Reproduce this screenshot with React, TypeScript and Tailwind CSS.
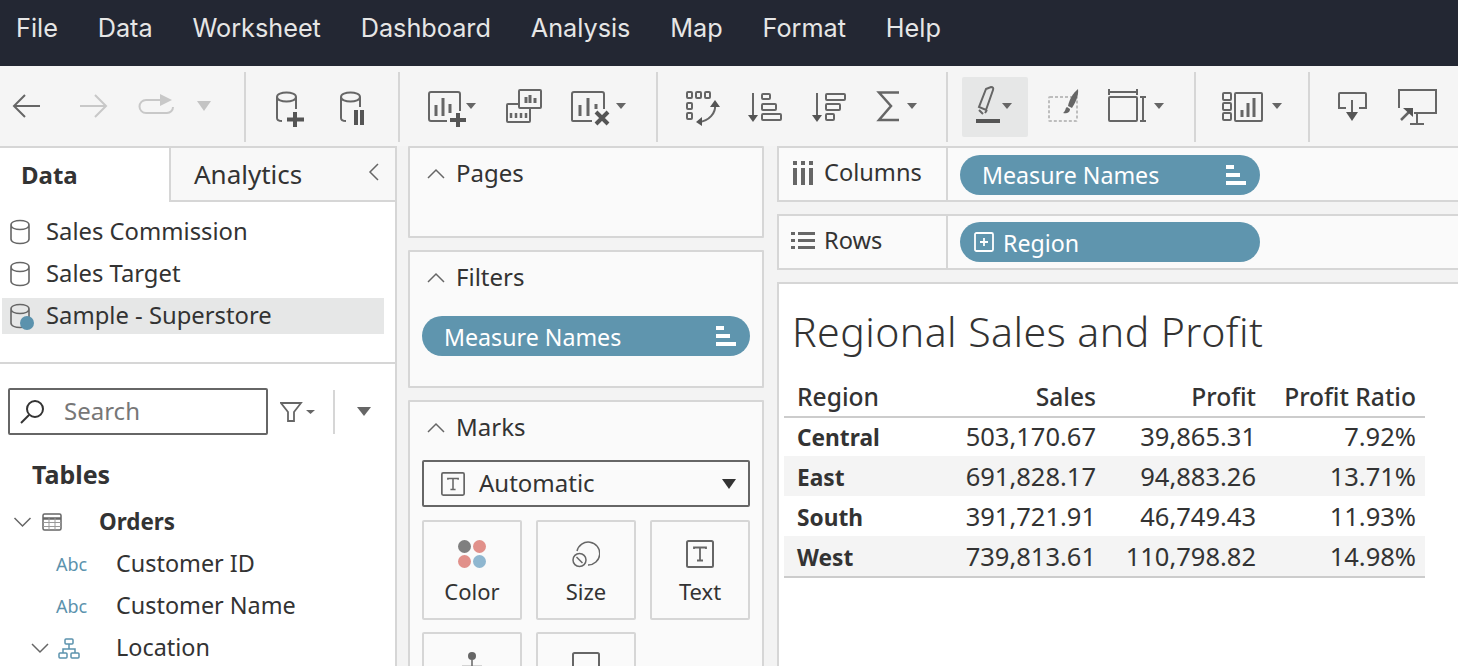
import type { ReactNode } from "react";

const sans = "font-['Noto_Sans',sans-serif]";

// toolbar cell: the svg uses page coordinates so strokes can be read straight off the reference
function Cell({ x, to, y = 72, h = 70, children }: { x: number; to: number; y?: number; h?: number; children: ReactNode }) {
  const w = to - x;
  return (
    <svg width={w} height={h} viewBox={`${x} ${y} ${w} ${h}`} fill="none" stroke="#666" strokeWidth="2" className="shrink-0">
      {children}
    </svg>
  );
}

const Sep = () => <div className="w-[2px] h-[70px] bg-[#d6d6d6] shrink-0" />;

function Caret({ x, y = 103, w = 10, h = 6, color = "#666" }: { x: number; y?: number; w?: number; h?: number; color?: string }) {
  return <path d={`M${x} ${y}h${w}l-${w / 2} ${h}z`} fill={color} stroke="none" />;
}

function Toolbar() {
  return (
    <div className="h-[80px] bg-[#f5f5f5] flex items-start pt-[6px] shrink-0">
      <Cell x={0} to={60}>
        <path d="M40 106H15M25 95 14 106 25 117" />
      </Cell>
      <Cell x={60} to={125}>
        <path d="M80 106h25M95 95l11 11-11 11" stroke="#c8c8c8" />
      </Cell>
      <Cell x={125} to={185}>
        <path d="M160 100h-14a6.500 6.500 0 0 0 0 13h21a6 6 0 0 0 6-6" stroke="#c8c8c8" />
        <path d="M160 94l12 6-12 6z" fill="#c8c8c8" stroke="none" />
      </Cell>
      <Cell x={185} to={244}>
        <Caret x={197} y={101} w={14} h={10} color="#c4c4c4" />
      </Cell>
      <Sep />
      <Cell x={246} to={322}>
        <path d="M277 97c0-6 19-6 19 0s-19 6-19 0v21c0 2 2 3 5 3M296 97v12" />
        <path d="M295 112v15M287 119.500h17" strokeWidth="4" stroke="#555" />
      </Cell>
      <Cell x={322} to={398}>
        <path d="M341 97c0-6 19-6 19 0s-19 6-19 0v21c0 2 2 3 5 3M360 97v10" />
        <path d="M356 110v15M362 110v15" strokeWidth="4" stroke="#555" />
      </Cell>
      <Sep />
      <Cell x={400} to={490}>
        <path d="M447 121h-16a2 2 0 0 1-2-2V94a2 2 0 0 1 2-2h27a2 2 0 0 1 2 2v17" />
        <path d="M436 105v11M443 98v18M450 104v9" strokeWidth="3" />
        <path d="M458 113v14M450 120h16" strokeWidth="4" stroke="#555" />
        <Caret x={466} />
      </Cell>
      <Cell x={490} to={557}>
        <rect x="519" y="90" width="22" height="18" rx="1" />
        <path d="M518 104h-10a1 1 0 0 0-1 1v16a1 1 0 0 0 1 1h21a1 1 0 0 0 1-1v-13" />
        <path d="M526 103v-6M530 103V95M535 103v-5" strokeWidth="3" />
        <path d="M511 118v-5M516 118v-5M521 118v-5M526 118v-5" strokeWidth="2.500" />
      </Cell>
      <Cell x={557} to={656}>
        <path d="M592 121h-19a1 1 0 0 1-1-1V94a2 2 0 0 1 2-2h28a2 2 0 0 1 2 2v15" />
        <path d="M580 105v11M588 98v18M596 104v5" strokeWidth="3" />
        <path d="M596 112l12 12M608 112l-12 12" strokeWidth="4" stroke="#555" />
        <Caret x={616} />
      </Cell>
      <Sep />
      <Cell x={658} to={733}>
        <rect x="687" y="92" width="5" height="6" rx="1" />
        <rect x="696" y="92" width="5" height="6" rx="1" />
        <rect x="705" y="92" width="5" height="6" rx="1" />
        <rect x="687" y="103" width="5" height="6" rx="1" />
        <rect x="687" y="113" width="5" height="6" rx="1" />
        <path d="M715 105c1 8-6 16-16 17" />
        <path d="M710 107h10l-5-7zM702 117v9l-6-4z" fill="#555" stroke="none" />
      </Cell>
      <Cell x={733} to={798}>
        <path d="M753 93v24" />
        <path d="M748 115h10l-5 7z" fill="#555" stroke="none" />
        <rect x="762" y="94" width="8" height="5" rx="1" />
        <rect x="762" y="104" width="14" height="6" rx="1" />
        <rect x="762" y="114" width="19" height="6" rx="1" />
      </Cell>
      <Cell x={798} to={862}>
        <path d="M817 93v24" />
        <path d="M812 115h10l-5 7z" fill="#555" stroke="none" />
        <rect x="826" y="94" width="19" height="6" rx="1" />
        <rect x="826" y="104" width="14" height="6" rx="1" />
        <rect x="826" y="114" width="8" height="6" rx="1" />
      </Cell>
      <Cell x={862} to={946}>
        <path d="M899 92.500h-20l12 13.500-12 14h20" strokeWidth="2.500" />
        <Caret x={907} />
      </Cell>
      <Sep />
      <div className="ml-[14px] mt-[5px] h-[60px] w-[66px] rounded-[2px] bg-[#e6e7e7] shrink-0">
        <Cell x={962} to={1028} y={77} h={60}>
          <path d="M986 89l5-2q3 0 2 3l-7 20-7-3z" />
          <path d="M979 110l4 4M985 113l2-3" />
          <path d="M976 121h24" strokeWidth="4" stroke="#555" />
          <Caret x={1002} />
        </Cell>
      </div>
      <Cell x={1028} to={1090}>
        <rect x="1049" y="97" width="28" height="24" rx="1" stroke="#bdbdbd" strokeDasharray="3 2" />
        <path d="M1078 89c1 7-3 14-6 19l-4-2c1-6 5-13 10-17z" fill="#666" stroke="none" />
        <path d="M1067 107c-2 1-1 4-4 6 3 1 7 0 7-4z" fill="#666" stroke="none" />
      </Cell>
      <Cell x={1090} to={1194}>
        <path d="M1109 89v6M1137 89v6M1109 92h28" />
        <rect x="1109" y="97" width="28" height="24" rx="1" />
        <path d="M1140 97h6M1143 97v24M1140 121h6" />
        <Caret x={1154} />
      </Cell>
      <Sep />
      <Cell x={1196} to={1308}>
        <rect x="1223" y="93" width="8" height="7" rx="1" />
        <rect x="1223" y="103" width="8" height="7" rx="1" />
        <rect x="1223" y="113" width="8" height="7" rx="1" />
        <rect x="1235" y="93" width="27" height="28" rx="1" />
        <path d="M1242 117v-7M1248 117v-14M1254 117V98" strokeWidth="3" />
        <Caret x={1272} />
      </Cell>
      <Sep />
      <Cell x={1310} to={1380}>
        <path d="M1346 108h-7V94a1 1 0 0 1 1-1h25a1 1 0 0 1 1 1v14h-7" />
        <path d="M1352 100v14" />
        <path d="M1346 112h12l-6 9z" fill="#555" stroke="none" />
      </Cell>
      <Cell x={1380} to={1458}>
        <path d="M1399 108V90h37v23h-22M1417 113v10M1410 124h14" />
        <path d="M1401 120l9-9" strokeWidth="2.500" />
        <path d="M1403 108h10v9z" fill="#555" stroke="none" />
      </Cell>
    </div>
  );
}

const Cylinder = () => (
  <svg width="22" height="26" viewBox="0 0 22 26" fill="none" stroke="#666" strokeWidth="1.600" className="shrink-0">
    <path d="M2 6c0-6 18-6 18 0s-18 6-18 0v14c0 6 18 6 18 0V6" />
  </svg>
);

function Chevron({ up = false, w = 18 }: { up?: boolean; w?: number }) {
  return (
    <svg width={w} height="11" viewBox="0 0 18 11" fill="none" stroke="#666" strokeWidth="1.500" className="shrink-0">
      <path d={up ? "M1 10 9 2l8 8" : "M1 1l8 8 8-8"} />
    </svg>
  );
}

function Source({ label, active = false }: { label: string; active?: boolean }) {
  return (
    <div className={`relative h-[36px] ml-[2px] w-[382px] pl-[7px] flex items-center gap-[15px] text-[23.8px] text-[#333] ${active ? "bg-[#e6e7e7]" : ""}`}>
      <Cylinder />
      {active && <span className="absolute left-[18px] top-[18px] size-[14px] rounded-full bg-[#5b92ad]" />}
      <span>{label}</span>
    </div>
  );
}

function Field({ label }: { label: string }) {
  return (
    <div className="h-[42px] flex items-center pl-[56px]">
      <span className="w-[60px] text-[18px] text-[#5b92ad]">Abc</span>
      <span className="text-[23.4px] text-[#333]">{label}</span>
    </div>
  );
}

function DataPane() {
  return (
    <div className="w-[397px] h-full shrink-0 bg-white border-r-[2px] border-[#d6d6d6] flex flex-col overflow-hidden">
      <div className="h-[56px] flex shrink-0 border-t-[2px] border-[#d6d6d6]">
        <div className="w-[169px] pl-[21px] pt-[9px] text-[24px] font-bold text-[#333]">Data</div>
        <div className="flex-1 h-[54px] bg-[#f8f8f8] border-l-[2px] border-b-[2px] border-[#d6d6d6] flex items-start justify-between pl-[23px] pr-[16px] pt-[7px] text-[26px] text-[#333]">
          <span>Analytics</span>
          <svg width="11" height="18" viewBox="0 0 11 18" fill="none" stroke="#666" strokeWidth="1.500" className="mt-[8px]">
            <path d="M10 1 2 9l8 8" />
          </svg>
        </div>
      </div>
      <div className="pt-[12px] flex flex-col gap-[6px] h-[162px] shrink-0 border-b-[2px] border-[#d6d6d6]">
        <Source label="Sales Commission" />
        <Source label="Sales Target" />
        <Source label="Sample - Superstore" active />
      </div>
      <div className="flex items-center h-[47px] mt-[24px] ml-[8px] shrink-0">
        <div className="w-[260px] h-[47px] border-[2px] border-[#666] rounded-[2px] flex items-center pl-[10px] gap-[19px] text-[24px] text-[#777]">
          <svg width="25" height="24" viewBox="0 0 25 24" fill="none" stroke="#333" strokeWidth="2">
            <circle cx="15" cy="9" r="8" />
            <path d="M9 15 1 23" />
          </svg>
          <span className="pb-[2px]">Search</span>
        </div>
        <svg width="36" height="20" viewBox="0 0 36 20" fill="none" stroke="#666" strokeWidth="1.800" className="ml-[12px]">
          <path d="M1 1h20l-7 9v9h-6v-9z" />
          <path d="M26 8h9l-4.500 4z" fill="#666" stroke="none" />
        </svg>
        <div className="ml-[17px] w-[2px] h-[44px] bg-[#d6d6d6]" />
        <svg width="14" height="9" viewBox="0 0 14 9" className="ml-[22px]">
          <path d="M0 0h14L7 9z" fill="#666" />
        </svg>
      </div>
      <div className="pl-[32px] mt-[22px] text-[25px] font-bold text-[#333] shrink-0 leading-[34px]">Tables</div>
      <div className="mt-[10px] flex flex-col">
        <div className="h-[42px] flex items-center pl-[13px]">
          <Chevron w={19} />
          <svg width="20" height="18" viewBox="0 0 20 18" fill="none" stroke="#666" className="ml-[10px]">
            <rect x="1" y="1" width="18" height="16" rx="1.500" strokeWidth="1.500" />
            <path d="M1 5.500h18" strokeWidth="2.500" />
            <path d="M1 9.500h18M1 13.500h18M7 5v12M13 5v12" strokeWidth="1" stroke="#999" />
          </svg>
          <span className="ml-[37px] text-[22.4px] font-bold text-[#333]">Orders</span>
        </div>
        <Field label="Customer ID" />
        <Field label="Customer Name" />
        <div className="h-[42px] flex items-center pl-[31px]">
          <Chevron w={18} />
          <svg width="22" height="21" viewBox="0 0 22 21" fill="none" stroke="#5b92ad" strokeWidth="1.500" className="ml-[9px]">
            <rect x="7" y="1" width="8" height="5" rx="1" />
            <rect x="1" y="15" width="8" height="5" rx="1" />
            <rect x="13" y="15" width="8" height="5" rx="1" />
            <path d="M11 6v5M5 15v-4h12v4" />
          </svg>
          <span className="ml-[36px] text-[23.4px] text-[#333]">Location</span>
        </div>
      </div>
    </div>
  );
}

function Panel({ title, className, children }: { title: string; className: string; children?: ReactNode }) {
  return (
    <div className={`w-[356px] shrink-0 bg-[#fafafa] border-[2px] border-[#d6d6d6] rounded-[1px] ${className}`}>
      <div className="flex items-center gap-[11px] pl-[17px] h-[48px] pt-[2px] text-[24px] text-[#333]">
        <Chevron up />
        <span>{title}</span>
      </div>
      {children}
    </div>
  );
}

function Bars() {
  return (
    <svg width="20" height="20" viewBox="0 0 20 20" fill="#fff">
      <rect x="0" y="0" width="8" height="4" />
      <rect x="0" y="8" width="14" height="4" />
      <rect x="0" y="16" width="20" height="4" />
    </svg>
  );
}

function Pill({ children, className = "" }: { children: ReactNode; className?: string }) {
  return (
    <div className={`h-[40px] rounded-full bg-[#5f95ae] flex items-center text-[23.2px] text-white ${className}`}>{children}</div>
  );
}

function MarkCard({ label, children }: { label?: string; children: ReactNode }) {
  return (
    <div className="h-[100px] bg-[#fafafa] border-[2px] border-[#d6d6d6] rounded-[2px] flex flex-col items-center pt-[18px]">
      <div className="h-[28px] flex items-start">{children}</div>
      {label && <span className="mt-[8px] text-[22px] leading-[30px] text-[#333]">{label}</span>}
    </div>
  );
}

const TBox = ({ size }: { size: number }) => (
  <svg width={size} height={size} viewBox="0 0 28 28" fill="none" stroke="#666" strokeWidth="2">
    <rect x="1" y="1" width="26" height="26" rx="1.500" />
    <path d="M8 9V7.500h12V9M14 7.500v13M11 20.500h6" strokeWidth="1.800" />
  </svg>
);

function Shelves() {
  return (
    <div className="w-[380px] shrink-0 h-full pl-[11px] flex flex-col gap-[12px] bg-[#f3f3f3]">
      <Panel title="Pages" className="h-[92px]" />
      <Panel title="Filters" className="h-[138px]">
        <Pill className="ml-[12px] mt-[16px] w-[328px] pl-[22px] pr-[14px] justify-between">
          <span className="pt-[2px]">Measure Names</span>
          <Bars />
        </Pill>
      </Panel>
      <Panel title="Marks" className="h-[320px]">
        <div className="mx-[12px] mt-[10px] h-[47px] border-[2px] border-[#666] rounded-[2px] flex items-center pl-[17px] pr-[12px] text-[24px] text-[#333]">
          <TBox size={24} />
          <span className="ml-[14px] flex-1 pb-[1px]">Automatic</span>
          <svg width="14" height="10" viewBox="0 0 14 10">
            <path d="M0 0h14L7 10z" fill="#333" />
          </svg>
        </div>
        <div className="mx-[12px] mt-[13px] grid grid-cols-3 gap-x-[14px] gap-y-[12px]">
          <MarkCard label="Color">
            <svg width="28" height="28" viewBox="0 0 28 28">
              <circle cx="6.500" cy="6.500" r="6.500" fill="#7f7f7f" />
              <circle cx="21.500" cy="6.500" r="6.500" fill="#e1908a" />
              <circle cx="6.500" cy="21.500" r="6.500" fill="#e1908a" />
              <circle cx="21.500" cy="21.500" r="6.500" fill="#8fb7d0" />
            </svg>
          </MarkCard>
          <MarkCard label="Size">
            <svg width="28" height="28" viewBox="0 0 28 28" fill="none" stroke="#666" strokeWidth="1.500">
              <path d="M5 11A11.500 11.500 0 1 1 16 25" />
              <circle cx="7.500" cy="20" r="6.500" />
              <path d="M4.500 17l6 6" />
            </svg>
          </MarkCard>
          <MarkCard label="Text">
            <TBox size={28} />
          </MarkCard>
          <MarkCard>
            <svg width="24" height="28" viewBox="0 0 24 28" fill="none" stroke="#666" strokeWidth="1.500">
              <circle cx="12" cy="4" r="4" fill="#666" stroke="none" />
              <path d="M12 8v6M2 14.500h20" />
            </svg>
          </MarkCard>
          <MarkCard>
            <svg width="28" height="28" viewBox="0 0 28 28" fill="none" stroke="#666" strokeWidth="2">
              <rect x="1" y="1" width="26" height="24" rx="1.500" />
            </svg>
          </MarkCard>
        </div>
      </Panel>
    </div>
  );
}

function ShelfRow({ label, icon, children }: { label: string; icon: ReactNode; children: ReactNode }) {
  return (
    <div className="h-[56px] bg-[#fafafa] border-y-[2px] border-l-[2px] border-[#d6d6d6] flex shrink-0">
      <div className="w-[169px] border-r-[2px] border-[#d6d6d6] flex items-center text-[23.6px] text-[#333] pb-[3px]">
        <div className="w-[45px] flex justify-center pl-[2px]">{icon}</div>
        <span>{label}</span>
      </div>
      <div className="pl-[12px] pt-[7px]">{children}</div>
    </div>
  );
}

const rows = [
  ["Central", "503,170.67", "39,865.31", "7.92%"],
  ["East", "691,828.17", "94,883.26", "13.71%"],
  ["South", "391,721.91", "46,749.43", "11.93%"],
  ["West", "739,813.61", "110,798.82", "14.98%"],
];

function Viz() {
  return (
    <div className="flex-1 bg-white border-t-[2px] border-l-[2px] border-[#d6d6d6] pl-[5px] overflow-hidden">
      <h1 className="mt-[21px] pl-[8px] text-[41px] tracking-[0.45px] leading-[52px] font-light text-[#333]">Regional Sales and Profit</h1>
      <div className="mt-[21px] w-[641px] text-[#333]">
        <div className="h-[40px] border-b-[2px] border-[#ccc] grid grid-cols-[139px_160px_160px_160px] items-center pl-[13px] text-[24.6px] font-medium">
          <span>Region</span>
          <span className="text-right">Sales</span>
          <span className="text-right">Profit</span>
          <span className="text-right">Profit Ratio</span>
        </div>
        {rows.map((r, i) => (
          <div
            key={r[0]}
            className={`${i === 0 ? "h-[38px] leading-[37px]" : "h-[40px] leading-[40px]"} grid grid-cols-[139px_160px_160px_160px] items-baseline pl-[13px] text-[25.5px] ${i % 2 ? "bg-[#f4f4f4]" : ""}`}
          >
            <span className="font-bold text-[22.7px]">{r[0]}</span>
            <span className="text-right">{r[1]}</span>
            <span className="text-right">{r[2]}</span>
            <span className="text-right">{r[3]}</span>
          </div>
        ))}
        <div className="h-[2px] bg-[#ccc]" />
      </div>
    </div>
  );
}

export default function App() {
  return (
    <div className={`w-[1458px] h-[666px] overflow-hidden flex flex-col bg-[#f3f3f3] ${sans}`}>
      <div className="h-[66px] bg-[#232733] flex items-center gap-[39.8px] pl-[16px] pb-[8px] text-[25.25px] text-[#e6e6e6] font-['Inter',sans-serif] shrink-0">
        {["File", "Data", "Worksheet", "Dashboard", "Analysis", "Map", "Format", "Help"].map((m) => (
          <span key={m}>{m}</span>
        ))}
      </div>
      <Toolbar />
      <div className="flex-1 flex min-h-0">
        <DataPane />
        <Shelves />
        <div className="flex-1 flex flex-col gap-[12px] min-w-0">
          <ShelfRow
            label="Columns"
            icon={
              <svg width="22" height="24" viewBox="0 0 22 24" fill="#666">
                <path d="M1 0h4v4H1zM9 0h4v4H9zM17 0h4v4h-4zM1 7h4v17H1zM9 7h4v17H9zM17 7h4v17h-4z" />
              </svg>
            }
          >
            <Pill className="w-[300px] pl-[22px] pr-[14px] justify-between">
              <span>Measure Names</span>
              <Bars />
            </Pill>
          </ShelfRow>
          <ShelfRow
            label="Rows"
            icon={
              <svg width="24" height="20" viewBox="0 0 24 20" fill="#666">
                <path d="M0 1h4v3H0zM7 1h17v3H7zM0 8h4v3H0zM7 8h17v3H7zM0 15h4v3H0zM7 15h17v3H7z" />
              </svg>
            }
          >
            <Pill className="w-[300px] -mt-[1px] pl-[14px] gap-[9px]">
              <svg width="20" height="20" viewBox="0 0 20 20" fill="none" stroke="#fff" strokeWidth="1.800">
                <rect x="1" y="1" width="18" height="18" rx="1.500" />
                <path d="M6 10h8M10 6v8" />
              </svg>
              <span className="pt-[2px]">Region</span>
            </Pill>
          </ShelfRow>
          <Viz />
        </div>
      </div>
    </div>
  );
}
